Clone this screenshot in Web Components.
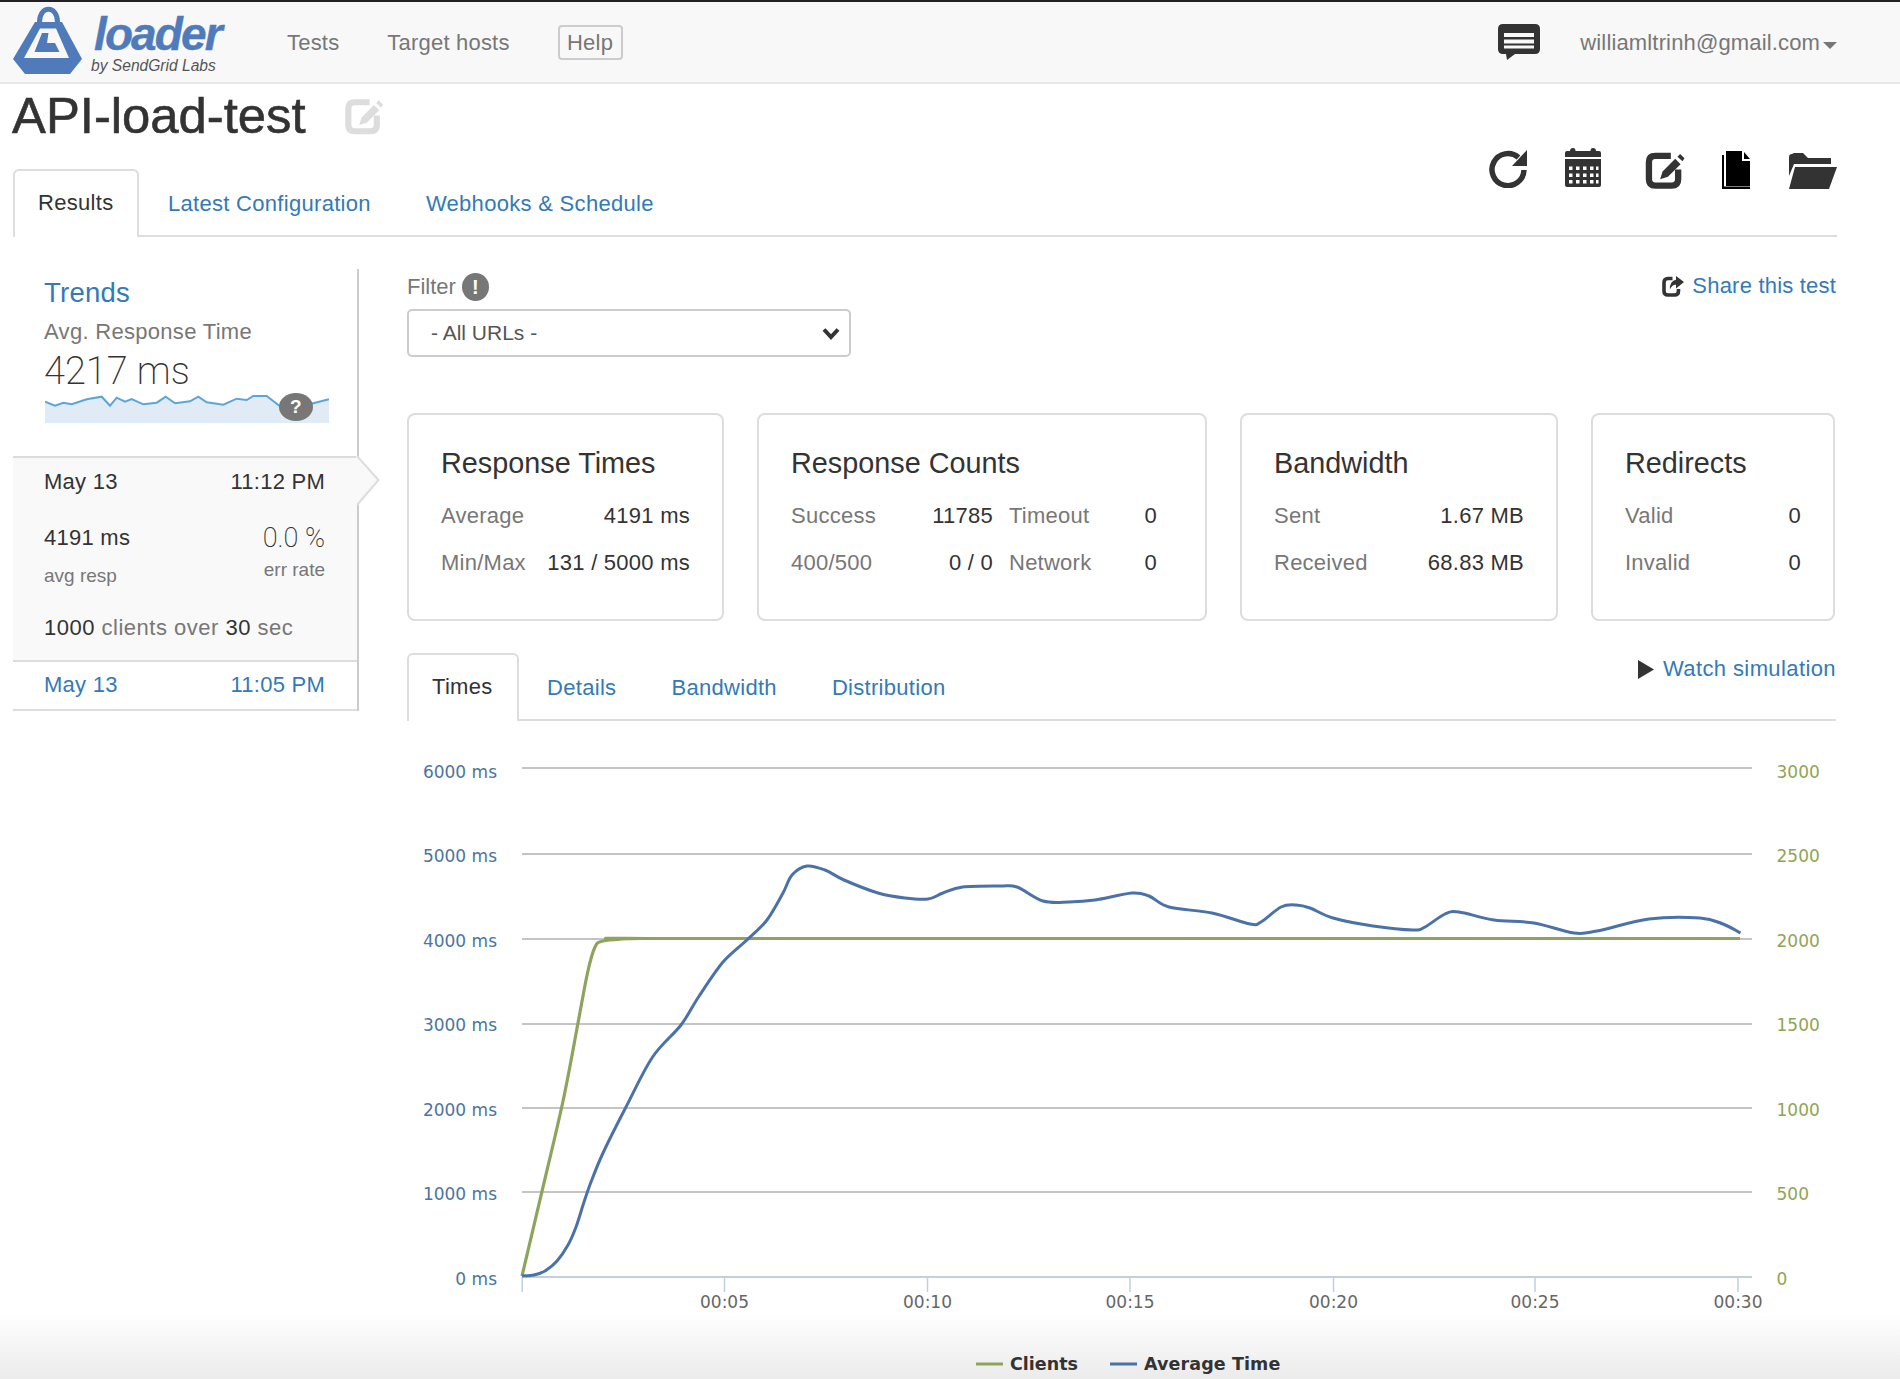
<!DOCTYPE html>
<html lang="en">
<head>
<meta charset="utf-8">
<title>API-load-test</title>
<style>
html,body{margin:0;padding:0}
body{height:1379px;overflow:hidden;font:22px/30px "Liberation Sans",Arial,sans-serif;letter-spacing:.25px;color:#333;background:#fff linear-gradient(to bottom,#fff,#ebebeb) bottom/100% 66px no-repeat}
</style>
</head>
<body>
<lt-app></lt-app>
<script>
const ICON = {
 edit:(c,w,h)=>`<svg width="${w}" height="${h}" viewBox="0 0 40 38" fill="none" style="display:block"><path d="M26 4H10Q3.500 4 3.500 10.500V28Q3.500 34.500 10 34.500H27Q33.500 34.500 33.500 28V18" stroke="${c}" stroke-width="6.500"/><path d="M15 28L17.500 20 30.500 7 36 12.500 23 25.500ZM32.800 4.800 35.500 2 40 6.500 38 9.500Z" fill="${c}"/></svg>`
};
function def(name, html){
  customElements.define(name, class extends HTMLElement{
    constructor(){super();const t=document.createElement('template');t.innerHTML=typeof html==='function'?html(this):html;this.attachShadow({mode:'open'}).appendChild(t.content.cloneNode(true));}
  });
}
def('lt-logo',`<style>
:host{display:flex;box-sizing:border-box;align-items:flex-start;width:210px;height:80px;padding-top:4px;color:#4f7bbb}
svg{display:block;flex:none}
.t{margin:0 0 0 8px;display:flex;flex-direction:column}
.l{font:italic bold 46px/46px "Liberation Sans",sans-serif;letter-spacing:-1.9px;margin:5px 0 0 4px;-webkit-text-stroke:.4px #4f7bbb}
.b{font:italic 15.600px/18px "Liberation Sans",sans-serif;letter-spacing:0;color:#555;margin:0 0 0 1px}
</style>
<svg width="69" height="70" viewBox="13 6 69 70"><path d="M39.500 22C39.500 5 57.500 5 57.500 22" fill="none" stroke="#4f7bbb" stroke-width="5"/><path d="M35 22H62L82 59 70 74H25L13 59Z" fill="#4f7bbb"/><path d="M40 28.500H56L69 58H24Z" fill="#f8f8f8"/><path d="M42 33H48.500L47 43H55L59.500 52H34.500Z" fill="#4f7bbb"/></svg>
<div class="t"><span class="l">loader</span><span class="b">by SendGrid Labs</span></div>`);
def('lt-navbar',`<style>
:host{display:flex;box-sizing:border-box;height:84px;align-items:center;background:#f8f8f8;border-top:2px solid #222;border-bottom:2px solid #e7e7e7;padding:0 63px 0 13px;color:#777}
lt-logo{margin-right:64px}
.n{margin:2px 48px 0 0;letter-spacing:.2px}
.h{box-sizing:border-box;height:35px;line-height:31px;width:65px;text-align:center;border:2px solid #ccc;border-radius:4px}
.sp{flex:1}
.chat{display:block;margin-right:40px}
.m{margin-top:2px;letter-spacing:.15px}
.caret{display:block;margin:6px 0 0 3px}
</style>
<lt-logo></lt-logo><span class="n">Tests</span><span class="n">Target hosts</span><span class="h">Help</span><span class="sp"></span>
<svg class="chat" width="42" height="36" viewBox="0 0 42 36"><path d="M5 0H37Q42 0 42 5V25Q42 30 37 30H17L9 36 8 30H5Q0 30 0 25V5Q0 0 5 0Z" fill="#333"/><path d="M6 9H36V13H6ZM6 15.500H36V19.500H6ZM6 21.500H36V24.500H6Z" fill="#f8f8f8"/></svg>
<span class="m">williamltrinh@gmail.com</span><svg class="caret" width="14" height="7" viewBox="0 0 14 7"><path d="M0 0H14L7 7Z" fill="#777"/></svg>`);
def('lt-title',()=>`<style>
:host{display:flex;align-items:center;height:64px;padding-left:12px}
h1{margin:0;font:500 50.800px/64px "Liberation Sans",sans-serif;letter-spacing:0;color:#333;-webkit-text-stroke:.6px #333}
svg{margin-left:39px}
</style><h1><slot></slot></h1>${ICON.edit('#ddd',38,37)}`);
def('lt-tabs',`<style>
:host{display:flex;box-sizing:border-box;border-bottom:2px solid #ddd;justify-content:space-between}
.l{display:flex;align-items:flex-end}
.r{display:block}
</style><div class="l"><slot></slot></div><div class="r"><slot name="right"></slot></div>`);
def('lt-tab',`<style>
:host{display:block;box-sizing:border-box;height:66px;line-height:66px;padding:0 26.500px;margin:0 0 -2px 2px;color:#337ab7;white-space:nowrap;letter-spacing:.3px}
:host([active]){height:68px;line-height:64px;padding:0 24px 0 23px;margin-left:0;color:#333;background:#fff;border:2px solid #ddd;border-bottom:0;border-radius:6px 6px 0 0}
</style><slot></slot>`);
def('lt-tools',()=>`<style>
:host{display:flex;align-items:flex-start;height:87px}
svg{display:block;flex:none}
</style>
<svg style="margin-top:2px" width="38" height="38" viewBox="0 0 38 38"><path d="M35 20A16 16 0 1 1 29.500 7.500" fill="none" stroke="#333" stroke-width="5.500"/><path d="M38 0V16H23Z" fill="#333"/></svg>
<svg style="margin:0 0 0 38px" width="36" height="39" viewBox="0 0 36 39"><path d="M0 9V5Q0 3 2 3H5Q5 0 8 0 10.500 0 10.500 3H25.500Q25.500 0 28 0 31 0 31 3H34Q36 3 36 5V9ZM0 11H36V37Q36 39 34 39H2Q0 39 0 37Z" fill="#333"/><path fill="#fff" d="M4 18.500h3.500v3.500h-3.500zM11 18.500h3.500v3.500h-3.500zM18 18.500h3.500v3.500h-3.500zM25 18.500h3.500v3.500h-3.500zM31 18.500h2.500v3.500h-2.500zM4 25.500h3.500v3.500h-3.500zM11 25.500h3.500v3.500h-3.500zM18 25.500h3.500v3.500h-3.500zM25 25.500h3.500v3.500h-3.500zM31 25.500h2.500v3.500h-2.500zM4 32h3.500v3.500h-3.500zM11 32h3.500v3.500h-3.500zM18 32h3.500v3.500h-3.500zM25 32h3.500v3.500h-3.500zM31 32h2.500v3.500h-2.500z"/></svg>
<span style="margin:4px 0 0 44px">${ICON.edit('#333',40,37)}</span>
<svg style="margin:3px 0 0 37px" width="28" height="38" viewBox="0 0 28 38"><path d="M0 4H2V35.500H28V38H0ZM4 0H20V10H28V35H4Z" fill="#000"/><path d="M22 1 28 8H22Z" fill="#000"/></svg>
<svg style="margin:5px 0 0 39px" width="48" height="36" viewBox="0 0 48 36"><path d="M0 4Q0 1 3 1L5 0H14L19 5H42V11H5L0 23Z" fill="#333"/><path d="M6 14H48L40 36H0Z" fill="#333"/></svg>`);
def('lt-sidebar',`<style>
:host{display:block;box-sizing:border-box;width:346px;margin:32px 0 0 13px;border-right:2px solid #ccc;height:442px}
.top{padding:9px 0 0 31px;height:187px;box-sizing:border-box}
h3{margin:0;font:27.500px/30px "Liberation Sans",sans-serif;color:#337ab7}
.sub{margin-top:9px;color:#777;letter-spacing:.3px}
.big{font:200 38px/44px Roboto,"Liberation Sans",sans-serif;letter-spacing:0;color:#333;margin-top:2px}
.spark{display:block;position:relative;width:284px;height:28px;margin:2px 0 0 1px}
.spark svg{display:block}
.q{position:absolute;left:234px;top:-2px;width:34px;height:28px;border-radius:50%;background:#777;color:#fff;font:bold 19px/28px "Liberation Sans",sans-serif;text-align:center}
.sel{position:relative;box-sizing:border-box;height:206px;background:#f9f9f9;border-top:2px solid #ddd;border-bottom:2px solid #ddd;padding:9px 32px 0 31px}
.row{display:flex;justify-content:space-between}
.arrow{position:absolute;left:343px;top:-2px;display:block}
.stats{margin-top:26px}
.lab{font-size:19px;color:#777;line-height:24px;letter-spacing:0}
.light{font:200 27px/30px Roboto,"Liberation Sans",sans-serif;letter-spacing:0;color:#333}
.r{text-align:right}
.cl{margin-top:25px;letter-spacing:.5px;color:#777}
.cl b{font-weight:400;color:#333}
.next{box-sizing:border-box;height:49px;padding:8px 32px 0 31px;border-bottom:2px solid #ddd;color:#337ab7}
</style>
<div class="top"><h3>Trends</h3><div class="sub">Avg. Response Time</div><div class="big">4217 ms</div>
<div class="spark"><svg width="284" height="28" viewBox="45 395 284 28"><path d="M45 401.700L55 405.700 63.300 402.700 71.700 404.300 86.700 399.300 101.700 396.700 110 405.700 116.700 397.700 125 401.700 131.700 399 143.300 404.300 156.700 402.700 165.700 396.700 175 403.300 190 401.300 198.300 396.700 206.700 402.300 223.300 404.700 236.700 398.700 246.700 400 253.300 396 266.700 396 279.300 405.700 288 413 313.300 403.300 329 399.300V423H45Z" fill="#e1ebf5"/><path d="M45 401.700L55 405.700 63.300 402.700 71.700 404.300 86.700 399.300 101.700 396.700 110 405.700 116.700 397.700 125 401.700 131.700 399 143.300 404.300 156.700 402.700 165.700 396.700 175 403.300 190 401.300 198.300 396.700 206.700 402.300 223.300 404.700 236.700 398.700 246.700 400 253.300 396 266.700 396 279.300 405.700 288 413 313.300 403.300 329 399.300" fill="none" stroke="#5ba6d6" stroke-width="2"/></svg><span class="q">?</span></div></div>
<div class="sel">
<svg class="arrow" width="24" height="50" viewBox="0 0 24 50"><path d="M0 0 1 1 22 24 1 49 0 50Z" fill="#f9f9f9"/><path d="M1 0 22.500 24 1 49" fill="none" stroke="#ddd" stroke-width="2"/></svg>
<div class="row"><span>May 13</span><span>11:12 PM</span></div>
<div class="row stats"><div><div>4191 ms</div><div class="lab" style="margin-top:11px">avg resp</div></div><div class="r"><div class="light">0.0 %</div><div class="lab" style="margin-top:5px">err rate</div></div></div>
<div class="cl"><b>1000</b> clients over <b>30</b> sec</div>
</div>
<div class="next row"><span>May 13</span><span>11:05 PM</span></div>`);
def('lt-filter',`<style>
:host{display:flex;justify-content:space-between;align-items:center;height:30px;margin-top:3px}
.f{display:flex;align-items:center;color:#777;letter-spacing:0}
.b{box-sizing:border-box;width:27px;height:28px;margin-left:6px;border-radius:50%;background:#777;color:#fff;font:bold 20px/28px "Liberation Sans",sans-serif;text-align:center}
.s{display:flex;align-items:center;color:#337ab7;letter-spacing:.2px;margin-bottom:2px}
svg{display:block;margin-right:8px}
</style><div class="f">Filter<span class="b">!</span></div>
<div class="s"><svg width="22" height="21" viewBox="0 0 22 21"><path d="M10.500 2.500H6Q2 2.500 2 6.500V15Q2 19 6 19H12.500Q16.500 19 16.500 15V13" fill="none" stroke="#333" stroke-width="3.600"/><path d="M14 0 22 6 14 12.500V8.800Q10.300 8.300 7.800 13.500 7.800 4.800 14 3.800Z" fill="#333"/></svg>Share this test</div>`);
def('lt-select',`<style>
:host{display:flex;box-sizing:border-box;align-items:center;justify-content:space-between;width:444px;height:48px;margin-top:7px;padding:0 9px 0 22px;border:2px solid #ccc;border-radius:5px;color:#555;background:#fff;font-size:21px;letter-spacing:0}
svg{display:block}
</style><span><slot></slot></span><svg width="18" height="13" viewBox="0 0 18 13"><path d="M2 2.500 9 10 16 2.500" fill="none" stroke="#333" stroke-width="4"/></svg>`);
def('lt-cards',`<style>:host{display:flex;gap:33px;margin-top:56px}</style><slot></slot>`);
def('lt-card',el=>`<style>
:host{display:block;box-sizing:border-box;height:208px;border:2px solid #ddd;border-radius:8px;padding:31px 32px 0 32px;flex:none}
h4{margin:0;font:400 28.800px/34px "Liberation Sans",sans-serif;letter-spacing:0;color:#333}
.g{display:grid;column-gap:16px;row-gap:17px;margin-top:21px}
</style><h4>${el.getAttribute('heading')}</h4><div class="g" style="grid-template-columns:${el.getAttribute('cols')||'1fr'}"><slot></slot></div>`);
def('lt-stat',el=>`<style>:host{display:flex;justify-content:space-between;white-space:nowrap}
.k{color:#777}</style><span class="k">${el.getAttribute('k')}</span><span>${el.getAttribute('v')}</span>`);
def('lt-watch',`<style>:host{display:flex;align-items:center;margin-top:1px;color:#337ab7;letter-spacing:.4px}svg{display:block;margin-right:9px}</style>
<svg width="16" height="19" viewBox="0 0 16 19"><path d="M0 0 16 9.500 0 19Z" fill="#333"/></svg><slot></slot>`);
def('lt-chart',()=>{
 const smooth=p=>{let d=`M${p[0][0]} ${p[0][1]}`;for(let i=0;i<p.length-1;i++){const a=p[i-1]||p[i],b=p[i],c=p[i+1],e=p[i+2]||c;d+=`C${(b[0]+(c[0]-a[0])/6).toFixed(1)} ${(b[1]+(c[1]-a[1])/6).toFixed(1)} ${(c[0]-(e[0]-b[0])/6).toFixed(1)} ${(c[1]-(e[1]-b[1])/6).toFixed(1)} ${c[0]} ${c[1]}`}return d};
 const blue=[[522,1276],[534,1275],[545.4,1270.7],[557,1261],[568,1245],[576,1227],[583.7,1203],[591,1182],[603,1153],[626,1107],[652.6,1057],[681,1025],[698.5,997],[723,962],[748,939],[767,920],[783,893],[792,875],[807,866],[825,870],[844,880],[878,893],[905,898],[928,899],[943,893],[962.6,887],[1000,886],[1017,887],[1043,901],[1069,902],[1095,900],[1132,893],[1149,896],[1169,907],[1212,913],[1250,924],[1261,922],[1281,907],[1296,905],[1310,908],[1333,918],[1373,926],[1413,930],[1425,927],[1445,914],[1459,912],[1494,920],[1534,923],[1574,933],[1597,931],[1649,919],[1700,918],[1723,924],[1740.5,933]];
 const green=[[522,1276],[541.6,1193],[562.6,1103],[578,1023],[587.5,973],[595,947],[603,941],[622,939],[645,938.5],[700,938.5],[1740,938.5]];
 const ys=[768,854,939,1024,1108,1192];
 const left=['6000 ms','5000 ms','4000 ms','3000 ms','2000 ms','1000 ms','0 ms'];
 const right=['3000','2500','2000','1500','1000','500','0'];
 const ly=[772,856,941,1025,1110,1194,1279];
 const xs=[724.5,927.5,1130,1333.5,1535,1738],xl=['00:05','00:10','00:15','00:20','00:25','00:30'];
 const F='font-family="DejaVu Sans,sans-serif" font-size="17" style="letter-spacing:0"';
 return `<style>:host{display:block;height:657px;margin-top:1px}svg{display:block}</style>
 <svg width="1429" height="657" viewBox="407 722 1429 657">
 ${ys.map(y=>`<rect x="522" y="${y-1}" width="1230" height="2" fill="#c4c4c4"/>`).join('')}
 <rect x="522" y="1276" width="1230" height="2" fill="#c0d0e0"/>
 <rect x="521.500" y="1277" width="1.500" height="15" fill="#c0d0e0"/>
 ${xs.map(x=>`<rect x="${x-.75}" y="1277" width="1.500" height="15" fill="#c0d0e0"/>`).join('')}
 ${left.map((t,i)=>`<text x="497" y="${ly[i]+6}" text-anchor="end" ${F} fill="#4d759e">${t}</text>`).join('')}
 ${right.map((t,i)=>`<text x="1776.500" y="${ly[i]+6}" ${F} fill="#8fa552">${t}</text>`).join('')}
 ${xs.map((x,i)=>`<text x="${x}" y="1308" text-anchor="middle" ${F} fill="#666">${xl[i]}</text>`).join('')}
 <path d="${smooth(green)}" fill="none" stroke="#8ea35c" stroke-width="3.200"/>
 <path d="${smooth(blue)}" fill="none" stroke="#4a72a8" stroke-width="3"/>
 <rect x="976" y="1362.500" width="27" height="3" fill="#8ea35c"/>
 <text x="1010" y="1370" font-family="DejaVu Sans,sans-serif" font-size="17.500" font-weight="700" fill="#333" style="letter-spacing:0">Clients</text>
 <rect x="1110" y="1362.500" width="27" height="3" fill="#4a72a8"/>
 <text x="1144" y="1370" font-family="DejaVu Sans,sans-serif" font-size="17.500" font-weight="700" fill="#333" style="letter-spacing:.1px">Average Time</text>
 </svg>`;
});
def('lt-app',`<style>
:host{display:block}
.head{padding-left:13px;width:1837px;box-sizing:border-box}
.body{display:flex}
.main{width:1429px;margin:32px 0 0 48px}
.low{margin-top:32px}
</style>
<lt-navbar></lt-navbar>
<lt-title>API-load-test</lt-title>
<div class="head"><lt-tabs><lt-tab active>Results</lt-tab><lt-tab>Latest Configuration</lt-tab><lt-tab>Webhooks &amp; Schedule</lt-tab><lt-tools slot="right"></lt-tools></lt-tabs></div>
<div class="body">
<lt-sidebar></lt-sidebar>
<div class="main">
<lt-filter></lt-filter>
<lt-select>- All URLs -</lt-select>
<lt-cards>
<lt-card heading="Response Times" style="width:317px"><lt-stat k="Average" v="4191 ms"></lt-stat><lt-stat k="Min/Max" v="131 / 5000 ms"></lt-stat></lt-card>
<lt-card heading="Response Counts" cols="202px 148px" style="width:450px"><lt-stat k="Success" v="11785"></lt-stat><lt-stat k="Timeout" v="0"></lt-stat><lt-stat k="400/500" v="0 / 0"></lt-stat><lt-stat k="Network" v="0"></lt-stat></lt-card>
<lt-card heading="Bandwidth" style="width:318px"><lt-stat k="Sent" v="1.67 MB"></lt-stat><lt-stat k="Received" v="68.83 MB"></lt-stat></lt-card>
<lt-card heading="Redirects" style="width:244px"><lt-stat k="Valid" v="0"></lt-stat><lt-stat k="Invalid" v="0"></lt-stat></lt-card>
</lt-cards>
<lt-tabs class="low"><lt-tab active>Times</lt-tab><lt-tab>Details</lt-tab><lt-tab>Bandwidth</lt-tab><lt-tab>Distribution</lt-tab><lt-watch slot="right">Watch simulation</lt-watch></lt-tabs>
<lt-chart></lt-chart>
</div>
</div>`);
</script>
</body>
</html>
